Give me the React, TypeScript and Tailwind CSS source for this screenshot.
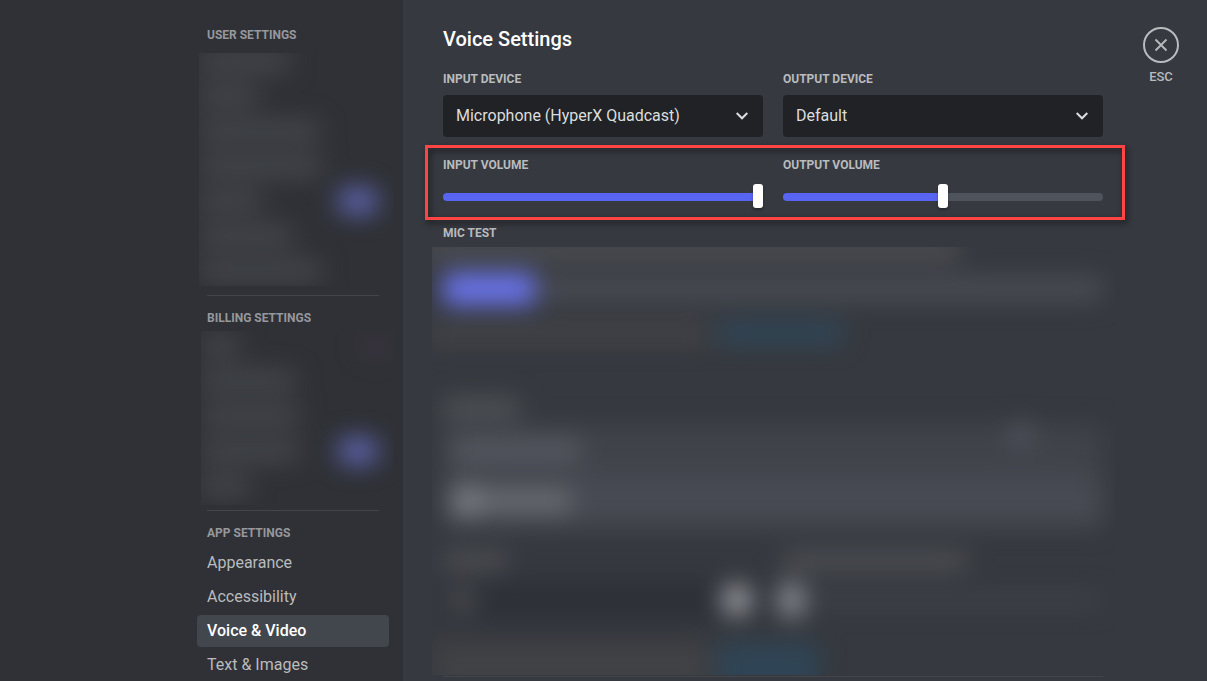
import type { ReactNode } from "react";
import { useState } from "react";

function SectionTitle({ children }: { children: ReactNode }) {
  return <h2 className="px-[10px] text-xs leading-4 font-bold uppercase text-[#96989d]">{children}</h2>;
}

function Smudge({ className }: { className: string }) {
  return <div className={`shrink-0 ${className}`} />;
}

function Bar({ width, badge }: { width: string; badge?: boolean }) {
  return (
    <div className="flex h-4 items-center justify-between pr-4">
      <Smudge className={`h-4 rounded bg-[#4b4e52] ${width}`} />
      {badge && <Smudge className="h-6 w-10 rounded-full bg-[#656cc0]" />}
    </div>
  );
}

function NavItem({ label, active }: { label: string; active?: boolean }) {
  return (
    <a
      href="#"
      aria-current={active ? "page" : undefined}
      className={`block rounded px-[10px] py-[6px] text-base leading-5 ${
        active ? "bg-[#42464d] font-medium text-white" : "text-[#b9bbbe]"
      }`}
    >
      {label}
    </a>
  );
}

function Sidebar() {
  return (
    <aside className="flex shrink grow basis-[403px] justify-end bg-[#2f3136] pr-[14px]">
      <nav className="w-[192px] pt-[27px]">
        <SectionTitle>User Settings</SectionTitle>
        <div aria-hidden="true" className="-mr-[5px] ml-[2px] mt-[10px] h-[233px] overflow-hidden">
          <div className="-mt-4 -ml-2 flex flex-col gap-[19px] pt-4 pl-2 blur-[13px]">
            <Bar width="w-[90px]" />
            <Bar width="w-[58px]" />
            <Bar width="w-[120px]" />
            <Bar width="w-[122px]" />
            <Bar width="w-[62px]" badge />
            <Bar width="w-[94px]" />
            <Bar width="w-[122px]" />
          </div>
        </div>
        <hr className="mx-[10px] mt-[9px] border-[#42454a]" />
        <div className="mt-[14px]">
          <SectionTitle>Billing Settings</SectionTitle>
        </div>
        <div aria-hidden="true" className="-mr-[5px] ml-1 mt-[5px] h-[174px] overflow-hidden">
          <div className="flex flex-col gap-[19px] pt-[7px] blur-[13px]">
            <div className="flex h-4 justify-between pr-1">
              <Smudge className="h-4 w-[38px] rounded bg-[#4b4e52]" />
              <Smudge className="h-4 w-7 rounded-full bg-[#433546]" />
            </div>
            <Bar width="w-[94px]" />
            <Bar width="w-[98px]" />
            <Bar width="w-[98px]" badge />
            <Bar width="w-[48px]" />
          </div>
        </div>
        <hr className="mx-[10px] mt-[5px] border-[#42454a]" />
        <div className="mt-[14px]">
          <SectionTitle>App Settings</SectionTitle>
        </div>
        <div className="mt-[6px] flex flex-col gap-[2px]">
          <NavItem label="Appearance" />
          <NavItem label="Accessibility" />
          <NavItem label="Voice & Video" active />
          <NavItem label="Text & Images" />
        </div>
      </nav>
    </aside>
  );
}

const fieldLabel = "block text-xs leading-4 font-bold uppercase text-[#b9bbbe]";

function DeviceSelect({ id, label, value }: { id: string; label: string; value: string }) {
  return (
    <div className="min-w-0 flex-1">
      <label htmlFor={id} className={fieldLabel}>
        {label}
      </label>
      <div className="relative mt-2">
        <select
          id={id}
          className="block h-[42px] w-full appearance-none rounded bg-[#202225] pr-10 pl-[13px] text-base text-[#dcddde]"
        >
          <option>{value}</option>
        </select>
        <svg
          viewBox="0 0 12 8"
          className="pointer-events-none absolute top-[17px] right-[15px] h-2 w-3"
          fill="none"
          stroke="#dcddde"
          strokeWidth="2"
          aria-hidden="true"
        >
          <path d="M0.7 1L6 6.3L11.3 1" />
        </svg>
      </div>
    </div>
  );
}

function VolumeSlider({ id, label, initial }: { id: string; label: string; initial: number }) {
  const [value, setValue] = useState(initial);
  return (
    <div className="min-w-0 flex-1">
      <label htmlFor={id} className={fieldLabel}>
        {label}
      </label>
      <input
        id={id}
        type="range"
        min={0}
        max={200}
        value={value}
        onChange={(e) => setValue(Number(e.target.value))}
        style={{
          backgroundImage: `linear-gradient(to right, #5865f2 ${value / 2}%, #4f545c ${value / 2}%)`,
        }}
        className="mt-5 block h-2 w-full appearance-none rounded-full [&::-webkit-slider-runnable-track]:h-2 [&::-webkit-slider-thumb]:-mt-[9px] [&::-webkit-slider-thumb]:h-6 [&::-webkit-slider-thumb]:w-[10px] [&::-webkit-slider-thumb]:appearance-none [&::-webkit-slider-thumb]:rounded-[3px] [&::-webkit-slider-thumb]:bg-white [&::-webkit-slider-thumb]:shadow-[0_2px_3px_rgba(0,0,0,0.3)]"
      />
    </div>
  );
}

function BlurredSettings() {
  return (
    <div aria-hidden="true" className="-mr-3 -ml-[11px] mt-[6px] h-[428px] overflow-hidden">
      <div className="-mt-4 flex flex-col pt-2 pr-3 pl-[11px] blur-[12px]">
        <Smudge className="-ml-6 h-[22px] w-[540px] bg-[#4c4e52]" />
        <div className="mt-3 flex items-center gap-1">
          <Smudge className="h-8 w-[92px] rounded bg-[#6b75ee]" />
          <div className="h-6 flex-1 rounded bg-[#494c54]" />
        </div>
        <div className="mt-[18px] flex h-5 gap-2">
          <Smudge className="-ml-4 h-5 w-[282px] bg-[#434447]" />
          <Smudge className="h-5 w-[126px] bg-[#2f485b]" />
        </div>
        <Smudge className="mt-[56px] h-[18px] w-[76px] bg-[#53565a]" />
        <div className="mt-2 flex h-[50px] items-center justify-between rounded bg-[#40434a] pr-[70px] pl-2">
          <Smudge className="h-6 w-[130px] bg-[#555860]" />
          <Smudge className="-mt-8 h-6 w-6 rounded-full bg-[#535660]" />
        </div>
        <div className="flex h-[52px] items-center rounded bg-[#474a52] pl-2">
          <Smudge className="size-8 rounded-full bg-[#7b7e83]" />
          <Smudge className="h-6 w-[88px] bg-[#686b71]" />
        </div>
        <div className="mt-[26px] flex gap-5">
          <div className="flex-1">
            <Smudge className="h-4 w-[64px] bg-[#505256]" />
          </div>
          <div className="flex-1">
            <Smudge className="h-4 w-[184px] bg-[#515357]" />
          </div>
        </div>
        <div className="mt-[10px] flex">
          <div className="flex h-[42px] w-1/2 items-center justify-between rounded bg-[#2e3138] pr-5 pl-2">
            <Smudge className="size-6 bg-[#4a4c50]" />
            <Smudge className="size-8 rounded-full bg-[#9a9da1]" />
          </div>
          <div className="flex h-[42px] w-1/2 items-center pl-1">
            <Smudge className="h-9 w-7 rounded-full bg-[#888b92]" />
            <div className="h-3 flex-1 bg-[#40434b]" />
          </div>
        </div>
        <div className="mt-[22px] flex h-12 gap-2">
          <Smudge className="-ml-2 h-12 w-[274px] bg-[#414245]" />
          <Smudge className="h-12 w-[102px] bg-[#2f4556]" />
        </div>
      </div>
    </div>
  );
}

function CloseButton() {
  return (
    <button type="button" className="flex shrink-0 flex-col items-center gap-[6px] self-start pt-[27px] text-[#b9bbbe]">
      <svg viewBox="0 0 36 36" className="size-9" fill="none" stroke="currentColor" aria-hidden="true">
        <circle cx="18" cy="18" r="17" strokeWidth="2" />
        <path d="M12.5 12.5L23.5 23.5M23.5 12.5L12.5 23.5" strokeWidth="1.8" />
      </svg>
      <span className="text-[13px] leading-4 font-medium">ESC</span>
    </button>
  );
}

export default function App() {
  return (
    <div className="flex min-h-screen bg-[#36393f] font-['Roboto','Noto_Sans',sans-serif]">
      <Sidebar />
      <main className="flex shrink grow basis-[804px] gap-10 pr-7 pl-10">
        <section className="max-w-[660px] min-w-0 flex-1 pt-[27px]">
          <h1 className="text-xl leading-6 font-medium text-white">Voice Settings</h1>
          <div className="mt-5 flex gap-5">
            <DeviceSelect id="input-device" label="Input Device" value="Microphone (HyperX Quadcast)" />
            <DeviceSelect id="output-device" label="Output Device" value="Default" />
          </div>
          <div className="relative mt-5 flex gap-5">
            <VolumeSlider id="input-volume" label="Input Volume" initial={200} />
            <VolumeSlider id="output-volume" label="Output Volume" initial={100} />
            <div className="pointer-events-none absolute -top-3 -right-[22px] -bottom-[19px] -left-[18px] border-3 border-[#ff4444] drop-shadow-[2px_3px_3px_rgba(0,0,0,0.6)]" />
          </div>
          <h2 className={`mt-6 ${fieldLabel}`}>Mic Test</h2>
          <BlurredSettings />
          <hr className="mt-px border-[#42454a]" />
        </section>
        <CloseButton />
      </main>
    </div>
  );
}
